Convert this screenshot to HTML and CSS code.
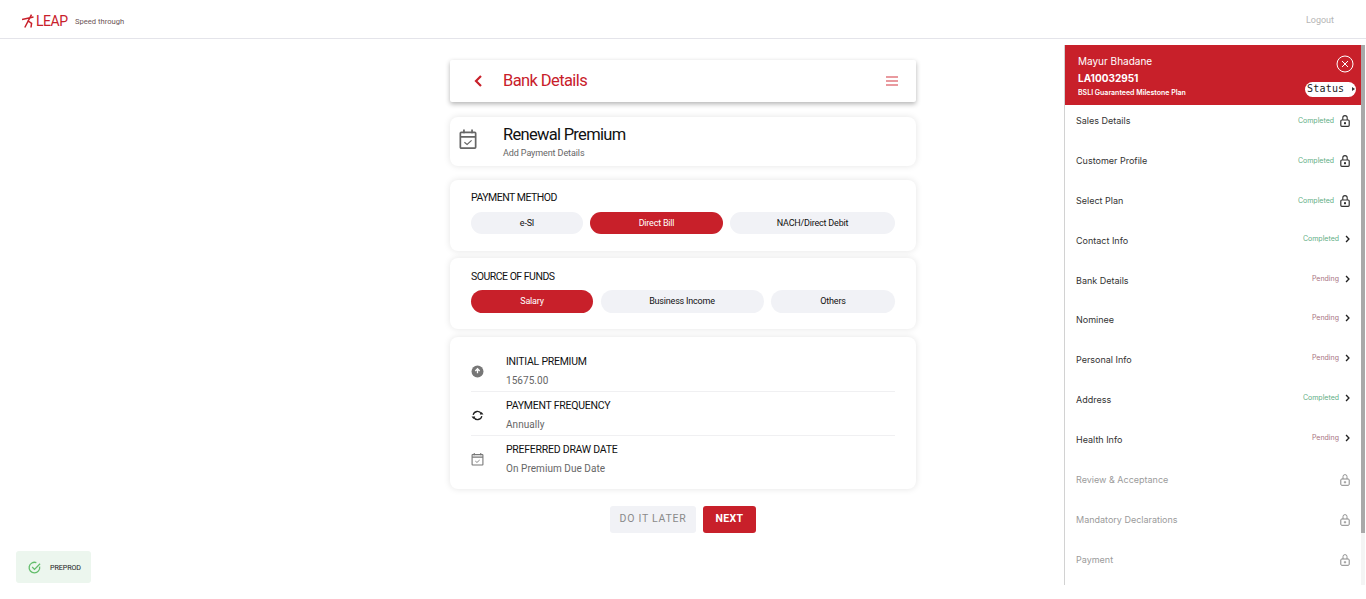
FILE: index.html
```html
<!DOCTYPE html>
<html lang="en">
<head>
<meta charset="utf-8">
<title>Bank Details</title>
<link rel="stylesheet" href="styles.css">
</head>
<body>
<header class="topbar">
  <div class="brand">
    <svg class="brand-mark" viewBox="0 0 12 14"><path d="M0 5.400 L11.500 3 M9.500 .6 L2.800 13.500 M5.500 6.500 L9.600 9.300 L9 13.500" fill="none" stroke="#c8202a" stroke-width="1.500"/></svg>
    <span class="brand-name">LEAP</span>
    <span class="brand-tag">Speed through</span>
  </div>
  <span class="logout">Logout</span>
</header>

<main class="content">
  <section class="card titlebar">
    <svg class="back" viewBox="0 0 10 14"><path d="M8 2 L3 7 L8 12" fill="none" stroke="#c8202a" stroke-width="2.200"/></svg>
    <h1 class="page-title">Bank Details</h1>
    <svg class="menu" viewBox="0 0 12 10"><path d="M0 1h12M0 5h12M0 9h12" stroke="#e27a80" stroke-width="1.500"/></svg>
  </section>

  <section class="card intro">
    <svg class="intro-icon" viewBox="0 0 20 22"><g fill="none" stroke="#666" stroke-width="1.900"><rect x="1.500" y="3" width="17" height="17.500" rx="1"/><path d="M1.500 8h17M5.500 0v4M14.500 0v4"/><path d="M6 14l3 2.500 5-4.500" stroke-width="1.300"/></g></svg>
    <div>
      <h2 class="intro-title">Renewal Premium</h2>
      <p class="intro-sub">Add Payment Details</p>
    </div>
  </section>

  <section class="card choice choice-method">
    <h3 class="choice-label">PAYMENT METHOD</h3>
    <div class="pills">
      <span class="pill pill-esi">e-SI</span>
      <span class="pill pill-direct active">Direct Bill</span>
      <span class="pill pill-nach">NACH/Direct Debit</span>
    </div>
  </section>

  <section class="card choice choice-funds">
    <h3 class="choice-label">SOURCE OF FUNDS</h3>
    <div class="pills">
      <span class="pill pill-salary active">Salary</span>
      <span class="pill pill-business">Business Income</span>
      <span class="pill pill-others">Others</span>
    </div>
  </section>

  <section class="card facts">
    <div class="fact fact-first">
      <svg class="fact-icon" viewBox="0 0 12 12"><circle cx="6" cy="6" r="5.500" fill="#777"/><path d="M4 5.500 L6 3.500 L8 5.500 M6 4.500v3" stroke="#fff" stroke-width="1.200" fill="none"/></svg>
      <div class="fact-text"><div class="fact-label">INITIAL PREMIUM</div><div class="fact-value">15675.00</div></div>
    </div>
    <div class="fact">
      <svg class="fact-icon" viewBox="0 0 12 12"><g fill="none" stroke="#222" stroke-width="1.200"><path d="M2 5.500 A4 4 0 0 1 9.500 4.500"/><path d="M10 6.500 A4 4 0 0 1 2.500 7.500"/></g><path d="M8 5h3.500l-1.700-2.200zM4 7H.5l1.700 2.200z" fill="#222"/></svg>
      <div class="fact-text"><div class="fact-label">PAYMENT FREQUENCY</div><div class="fact-value">Annually</div></div>
    </div>
    <div class="fact">
      <svg class="fact-icon" viewBox="0 0 12 12"><g fill="none" stroke="#777" stroke-width="1"><rect x="1" y="1.500" width="10" height="9.500" rx=".5"/><path d="M3 0v2M9 0v2M1 3.800h10"/><path d="M4 7.500l1.500 1.200 2.500-2.200" stroke-width=".8"/></g></svg>
      <div class="fact-text"><div class="fact-label">PREFERRED DRAW DATE</div><div class="fact-value">On Premium Due Date</div></div>
    </div>
  </section>

  <div class="actions">
    <span class="btn btn-later">DO IT LATER</span>
    <span class="btn btn-next">NEXT</span>
  </div>
</main>

<aside class="sidebar">
  <div class="profile">
    <div class="profile-name">Mayur Bhadane</div>
    <div class="profile-id">LA10032951</div>
    <div class="profile-plan">BSLI Guaranteed Milestone Plan</div>
    <svg class="close" viewBox="0 0 18 18"><circle cx="9" cy="9" r="8" fill="none" stroke="#fff" stroke-width="1"/><path d="M6 6l6 6M12 6l-6 6" stroke="#fff" stroke-width="1"/></svg>
    <span class="status">Status<i class="status-arrow"></i></span>
  </div>
  <ul class="steps">
    <li class="step"><span>Sales Details</span><span class="state done">Completed</span><svg class="lock" viewBox="0 0 10 12"><use href="#lock-closed"/></svg></li>
    <li class="step"><span>Customer Profile</span><span class="state done">Completed</span><svg class="lock" viewBox="0 0 10 12"><use href="#lock-closed"/></svg></li>
    <li class="step"><span>Select Plan</span><span class="state done">Completed</span><svg class="lock" viewBox="0 0 10 12"><use href="#lock-closed"/></svg></li>
    <li class="step"><span>Contact Info</span><span class="state done">Completed</span><svg class="chev" viewBox="0 0 6 10"><use href="#chev"/></svg></li>
    <li class="step"><span>Bank Details</span><span class="state pending">Pending</span><svg class="chev" viewBox="0 0 6 10"><use href="#chev"/></svg></li>
    <li class="step"><span>Nominee</span><span class="state pending">Pending</span><svg class="chev" viewBox="0 0 6 10"><use href="#chev"/></svg></li>
    <li class="step"><span>Personal Info</span><span class="state pending">Pending</span><svg class="chev" viewBox="0 0 6 10"><use href="#chev"/></svg></li>
    <li class="step"><span>Address</span><span class="state done">Completed</span><svg class="chev" viewBox="0 0 6 10"><use href="#chev"/></svg></li>
    <li class="step"><span>Health Info</span><span class="state pending">Pending</span><svg class="chev" viewBox="0 0 6 10"><use href="#chev"/></svg></li>
    <li class="step locked"><span>Review &amp; Acceptance</span><svg class="lock" viewBox="0 0 10 12"><use href="#lock-open"/></svg></li>
    <li class="step locked"><span>Mandatory Declarations</span><svg class="lock" viewBox="0 0 10 12"><use href="#lock-open"/></svg></li>
    <li class="step locked"><span>Payment</span><svg class="lock" viewBox="0 0 10 12"><use href="#lock-open"/></svg></li>
  </ul>
  <div class="scrollbar"><div class="scroll-thumb"></div></div>
</aside>

<div class="env">
  <svg class="env-icon" viewBox="0 0 14 14"><path d="M12.500 6 A5.700 5.700 0 1 1 9 1.800" fill="none" stroke="#63bd6b" stroke-width="1.400"/><path d="M4.500 6.500l2.500 2.500 6-6" fill="none" stroke="#63bd6b" stroke-width="1.400"/></svg>
  <span>PREPROD</span>
</div>

<svg class="defs" aria-hidden="true">
  <symbol id="lock-closed" viewBox="0 0 10 12"><path d="M2.800 5V2.800a2.200 2.200 0 0 1 4.400 0V5" fill="none" stroke="#333" stroke-width="1.100"/><rect x=".8" y="5" width="8.400" height="6.300" rx="1" fill="none" stroke="#333" stroke-width="1.200"/><rect x="4" y="7.200" width="2" height="2" fill="#333"/></symbol>
  <symbol id="lock-open" viewBox="0 0 10 12"><path d="M3 5V2.600a2 2 0 0 1 4 0V5" fill="none" stroke="#888" stroke-width=".9"/><rect x=".8" y="5" width="8.400" height="6.300" rx="1" fill="none" stroke="#888" stroke-width="1"/><path d="M5 7v2.400M3.800 8.200h2.400" stroke="#888" stroke-width=".8"/></symbol>
  <symbol id="chev" viewBox="0 0 6 10"><path d="M1.200 1.200 L4.800 5 L1.200 8.800" fill="none" stroke="#222" stroke-width="1.700"/></symbol>
</svg>
</body>
</html>
```

FILE: styles.css
```css
* { box-sizing: border-box; }
html, body { margin: 0; padding: 0; height: 599px; overflow: hidden; background: #fff; }
body { font-family: Roboto, "Liberation Sans", sans-serif; color: #111; }
h1, h2, h3, p, ul { margin: 0; padding: 0; font-weight: 400; }
ul { list-style: none; }
.defs { width: 0; height: 0; position: absolute; }

.topbar { height: 39px; border-bottom: 1px solid #e4e4ea; display: flex; align-items: center; justify-content: space-between; padding: 4px 32px 0 22px; }
.brand { display: flex; align-items: center; }
.brand-mark { width: 12px; height: 14px; }
.brand-name { color: #c8202a; font-size: 14px; margin-left: 2px; width: 39px; letter-spacing: -.5px; }
.brand-tag { color: #6d5557; font-size: 7.600px; }
.logout { color: #b5b5b5; font-size: 9px; margin-top: -3px; }

.content { width: 466px; margin: 21px auto 0; display: flex; flex-direction: column; }
.card { background: #fff; border-radius: 8px; box-shadow: 0 0 7px rgba(0,0,0,.11); }

.titlebar { height: 42px; display: flex; align-items: center; padding: 0 18px 0 23px; border-radius: 2px; box-shadow: 0 2px 5px rgba(0,0,0,.3); }
.back { width: 10px; height: 14px; }
.page-title { color: #c8202a; font-size: 16.500px; margin: -1px 0 0 20px; flex: 1; letter-spacing: -.6px; }
.menu { width: 12px; height: 10px; }

.intro { height: 49px; margin-top: 15px; display: flex; align-items: center; padding-left: 9px; gap: 26px; }
.intro-icon { width: 18px; height: 21px; margin-top: -4px; flex: none; }
.intro-title { font-size: 16.500px; line-height: 20px; letter-spacing: -.7px; padding-top: 1px; }
.intro-sub { font-size: 9px; color: #666; margin-top: 2px; line-height: 12px; letter-spacing: -.1px; }

.choice { padding: 11px 21px 0; }
.choice-method { height: 71px; margin-top: 14px; }
.choice-funds { height: 71px; margin-top: 7px; padding-top: 12px; }
.choice-label { font-size: 10.500px; line-height: 14px; letter-spacing: -.5px; }
.pills { display: flex; margin-top: 7px; gap: 7px; }
.choice-funds .pills { margin-top: 6px; gap: 8px 7.500px; }
.pill { height: 22px; border-radius: 11px; background: #f1f2f6; font-size: 9px; display: flex; align-items: center; justify-content: center; letter-spacing: -.2px; padding-bottom: 1px; }
.choice-funds .pill { height: 23px; border-radius: 12px; }
.pill.active { background: #c8202a; color: #fff; }
.pill-esi { width: 112px; }
.pill-direct { width: 133px; }
.pill-nach { width: 165px; }
.pill-salary { width: 122px; }
.pill-business { width: 163px; }
.pill-others { width: 124px; }

.facts { height: 152px; margin-top: 8px; padding: 11px 21px 0; }
.fact { height: 44px; display: flex; align-items: center; border-top: 1px solid #f0f0f2; gap: 22px; }
.fact-first { height: 43px; border-top: 0; }
.fact-icon { width: 13px; height: 13px; flex: none; margin-top: 3px; }
.fact-text { padding-top: 2px; }
.fact-label { font-size: 10.500px; line-height: 14px; letter-spacing: -.25px; padding-top: 1px; }
.fact-value { font-size: 10px; line-height: 13px; color: #666; margin-top: 5px; letter-spacing: .05px; }

.actions { display: flex; justify-content: center; gap: 7px; margin-top: 17px; }
.btn { height: 27px; border-radius: 3px; display: flex; align-items: center; justify-content: center; font-size: 10.500px; padding-bottom: 2px; }
.btn-later { width: 86px; background: #f1f2f6; color: #8a8a8a; letter-spacing: .75px; }
.btn-next { width: 53px; background: #c8202a; color: #fff; font-weight: 700; letter-spacing: .35px; }

.sidebar { position: absolute; left: 1064px; top: 45px; width: 301px; height: 540px; border-left: 1px solid #d2d2d2; font-family: Inter, "Open Sans", sans-serif; }
.profile { position: relative; width: 296px; height: 60px; background: #c8202a; color: #fff; padding: 9px 0 0 13px; }
.profile-name { font-size: 10px; line-height: 15px; }
.profile-id { font-size: 10px; line-height: 15px; font-weight: 700; margin-top: 2px; }
.profile-plan { font-size: 7px; line-height: 10px; font-weight: 600; margin-top: 2px; }
.close { position: absolute; right: 7px; top: 10px; width: 18px; height: 18px; }
.status { position: absolute; right: 5px; top: 37px; width: 51px; height: 15px; border-radius: 8px; background: #fff; color: #222; font-family: "DejaVu Sans Mono", monospace; font-size: 10px; line-height: 14px; padding-left: 2px; letter-spacing: .2px; }
.status-arrow { position: absolute; right: 1px; top: 5px; border-left: 3px solid #333; border-top: 2.500px solid transparent; border-bottom: 2.500px solid transparent; }

.steps { width: 296px; }
.step { height: 39.900px; display: flex; align-items: flex-start; padding: 9px 11px 0 11px; font-size: 9px; line-height: 13px; color: #333; }
.step > span:first-child { flex: 1; }
.state { font-size: 7px; margin-right: 5px; line-height: 12px; margin-top: 1px; }
.state:has(+ .chev) { margin-top: -1px; }
.done { color: #5fae85; }
.pending { color: #a8737f; }
.lock { width: 10px; height: 12px; margin-top: 1px; margin-left: 1px; }
.chev { width: 5px; height: 8px; margin-top: 1px; margin-left: 1px; }
.locked { color: #9b9b9b; }
.scrollbar { position: absolute; right: 0; top: 0; width: 4px; height: 100%; background: #f4f4f4; }
.scroll-thumb { height: 488px; background: #a9a9a9; }

.env { position: absolute; left: 16px; top: 551px; width: 75px; height: 32px; border-radius: 3px; background: #ecf6ee; display: flex; align-items: center; padding-left: 12px; gap: 9px; font-size: 7.200px; letter-spacing: -.1px; color: #222; }
.env-icon { width: 13px; height: 13px; }
```
